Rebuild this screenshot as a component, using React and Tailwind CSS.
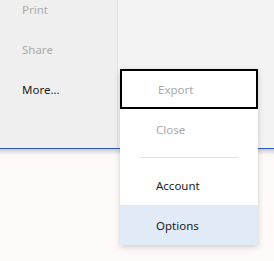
import React from 'react';

const font = { fontFamily: '"Segoe UI", "Noto Sans", "Open Sans", sans-serif' };

function SideItem({ label, disabled }) {
    return (
        <div className={`h-10 flex items-center pl-[22px] text-[11.5px] ${disabled ? 'text-[#ababab]' : 'text-[#1b1b1b]'}`}>
            {label}
        </div>
    );
}

function MenuItem({ label, disabled, focused, active }) {
    return (
        <div
            className={`h-10 flex items-center pl-[36px] pt-px text-[11.5px] ${disabled ? 'text-[#a8a8a8]' : 'text-[#1b1b1b]'} ${
                focused ? 'border-2 border-black pl-[34px]' : ''
            } ${active ? 'bg-[#e1ebf8]' : ''}`}
        >
            {label}
        </div>
    );
}

export default function App() {
    return (
        <div className="relative w-[274px] h-[261px] overflow-hidden bg-[#fdf9f8]" style={font}>
            <div className="flex h-[148px] bg-[#f3f3f3]">
                <div className="w-[118px] bg-[#efefef] border-r border-[#e3e3e3] -mt-[11px] pt-px">
                    <SideItem label="Print" disabled />
                    <SideItem label="Share" disabled />
                    <SideItem label="More..." />
                </div>
                <div className="flex-1" />
            </div>
            <div className="h-px bg-[#2a5cc2]" />
            <div className="h-[6px] bg-gradient-to-b from-[#cfcccb] to-[#fdf9f8]" />

            <div className="absolute left-[120px] top-[69px] w-[138px] bg-white shadow-[0_2px_6px_rgba(0,0,0,0.18)]">
                <MenuItem label="Export" disabled focused />
                <MenuItem label="Close" disabled />
                <div className="h-4 flex items-center px-5">
                    <div className="h-px w-full bg-[#e2e2e2]" />
                </div>
                <MenuItem label="Account" />
                <MenuItem label="Options" active />
            </div>
        </div>
    );
}
